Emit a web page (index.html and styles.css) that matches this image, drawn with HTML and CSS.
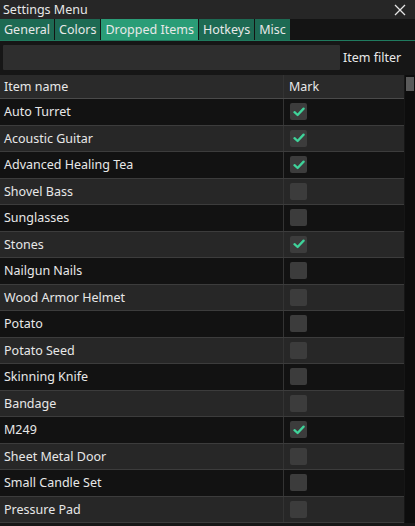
FILE: index.html
```html
<!DOCTYPE html>
<html lang="en">
<head>
  <meta charset="UTF-8">
  <meta name="viewport" content="width=device-width,initial-scale=1.0">
  <title>Settings Menu</title>
  <link rel="stylesheet" href="styles.css">
</head>
<body>
  <div class="window">
    <!-- タイトルバー -->
    <div class="titlebar">
      <span class="title">Settings Menu</span>
      <span class="close">
        <svg width="12" height="12" viewBox="0 0 12 12"><path d="M1 1 L11 11 M11 1 L1 11" stroke="#e6e6e6" stroke-width="1.3" fill="none"/></svg>
      </span>
    </div>

    <!-- タブ -->
    <div class="tabs">
      <div class="tab">General</div>
      <div class="tab">Colors</div>
      <div class="tab active">Dropped Items</div>
      <div class="tab">Hotkeys</div>
      <div class="tab">Misc</div>
    </div>

    <!-- フィルター -->
    <div class="filter-row">
      <div class="filter-input"></div>
      <span class="filter-label">Item filter</span>
    </div>

    <!-- アイテム一覧 -->
    <div class="table-area">
      <div class="item-table">
        <div class="row head">
          <div class="cell name">Item name</div>
          <div class="cell mark">Mark</div>
        </div>
        <div id="rows"></div>
      </div>
      <div class="scrollbar"><div class="thumb"></div></div>
    </div>
  </div>

  <script>
    const items = [
      ["Auto Turret", true],
      ["Acoustic Guitar", true],
      ["Advanced Healing Tea", true],
      ["Shovel Bass", false],
      ["Sunglasses", false],
      ["Stones", true],
      ["Nailgun Nails", false],
      ["Wood Armor Helmet", false],
      ["Potato", false],
      ["Potato Seed", false],
      ["Skinning Knife", false],
      ["Bandage", false],
      ["M249", true],
      ["Sheet Metal Door", false],
      ["Small Candle Set", false],
      ["Pressure Pad", false]
    ];
    const wrap = document.getElementById("rows");
    items.forEach(([name, checked], i) => {
      const row = document.createElement("div");
      row.className = "row " + (i % 2 ? "even" : "odd");
      row.innerHTML = `
        <div class="cell name">${name}</div>
        <div class="cell mark"><span class="checkbox">${checked ? '<svg width="12" height="10" viewBox="0 0 12 10"><path d="M1.5 5.2 L4.6 8 L10.6 1.6" stroke="#3fd39a" stroke-width="2.3" fill="none" stroke-linecap="round" stroke-linejoin="round"/></svg>' : ''}</span></div>
      `;
      wrap.appendChild(row);
    });
  </script>
</body>
</html>
```

FILE: styles.css
```css
* {
  margin: 0;
  padding: 0;
  box-sizing: border-box;
}
body {
  font-family: "Noto Sans", "Open Sans", sans-serif;
  background-color: #141414;
  color: #e8e8e8;
  width: 415px;
  height: 526px;
  overflow: hidden;
}
.window {
  width: 415px;
  height: 526px;
  background-color: #161616;
}

/* タイトルバー */
.titlebar {
  height: 19px;
  background-color: #262626;
  display: flex;
  align-items: center;
  justify-content: space-between;
  padding: 0 9px 0 3px;
  font-size: 12.5px;
}
.close {
  display: flex;
}

/* タブ */
.tabs {
  display: flex;
  gap: 1px;
  height: 22px;
  background-color: #141414;
  border-bottom: 1px solid #1f7a5e;
}
.tab {
  background-color: #1d6a53;
  font-size: 12.5px;
  padding: 0 4px;
  line-height: 21px;
}
.tab.active {
  background-color: #2a9d77;
}

/* フィルター */
.filter-row {
  display: flex;
  align-items: center;
  padding: 4px 0 0 3px;
  gap: 3px;
}
.filter-input {
  width: 337px;
  height: 25px;
  background-color: #2e2e2e;
  border-radius: 1px;
}
.filter-label {
  font-size: 12.5px;
}

/* テーブル */
.table-area {
  display: flex;
  margin-top: 5px;
}
.item-table {
  width: 405px;
}
.row {
  display: grid;
  grid-template-columns: 284px 1fr;
  height: 26.53px;
  border-bottom: 1px solid #3c3c3c;
  font-size: 12.5px;
}
.row.head {
  height: 24px;
  background-color: #2a2a2a;
  border-bottom: 1px solid #4a4a4a;
}
.row.odd {
  background-color: #121212;
}
.row.even {
  background-color: #272727;
}
.cell {
  display: flex;
  align-items: center;
}
.cell.name {
  padding-left: 4px;
  border-right: 1px solid #333;
}
.cell.mark {
  padding-left: 6px;
}
.row.head .cell.mark {
  padding-left: 5px;
}
.checkbox {
  width: 17px;
  height: 17px;
  border-radius: 2px;
  background-color: #3c3c3c;
  display: flex;
  align-items: center;
  justify-content: center;
}

/* スクロールバー */
.scrollbar {
  width: 10px;
  margin-left: 1px;
  background-color: #0d0d0d;
  padding: 2px 1px;
}
.thumb {
  height: 14px;
  background-color: #5a5a5a;
}
```
